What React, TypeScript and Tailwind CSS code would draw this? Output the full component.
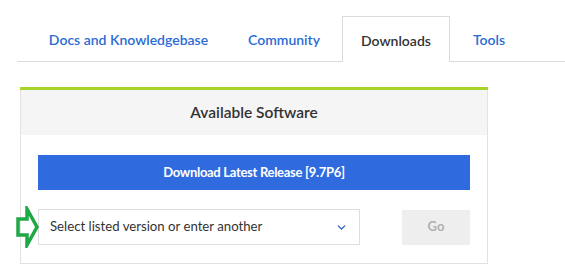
import { ChevronDown } from 'lucide-react'

const tabs = [
  { label: 'Docs and Knowledgebase', width: 'w-[195px]', active: false },
  { label: 'Community', width: 'w-[110px]', active: false },
  { label: 'Downloads', width: 'w-[108px]', active: true },
  { label: 'Tools', width: 'w-[72px]', active: false },
]

function GreenArrow() {
  return (
    <svg
      className="absolute left-[-23px] top-[-4px]"
      width="24"
      height="42"
      viewBox="0 0 24 42"
    >
      <path
        d="M2 13 H11 V3 L21 21 L11 39 V29 H2 Z"
        fill="none"
        stroke="#1fa846"
        strokeWidth="3.5"
        strokeLinejoin="miter"
      />
    </svg>
  )
}

export default function App() {
  return (
    <div
      className="w-[565px] h-[274px] bg-white overflow-hidden"
      style={{ fontFamily: 'Lato, "Open Sans", sans-serif' }}
    >
      {/* Tab strip */}
      <div className="pt-[16px] ml-[17px] border-b border-[#dcdcdc] h-[62px] flex items-stretch pl-[14px] gap-[3px]">
        {tabs.map((tab) => (
          <div
            key={tab.label}
            className={`${tab.width} shrink-0 flex items-center justify-center pt-[2px] text-[14px] font-semibold ${
              tab.active
                ? 'text-[#333333] bg-white border border-b-0 border-[#dcdcdc] -mb-px'
                : 'text-[#2a6bd4]'
            }`}
          >
            {tab.label}
          </div>
        ))}
      </div>

      {/* Panel */}
      <div className="ml-[20px] mt-[25px] w-[468px] border border-t-0 border-[#e2e2e2]">
        <div className="h-[3px] bg-[#a8d42a] -mx-px" />
        <div className="h-[45px] bg-[#f5f5f5] flex items-center justify-center text-[15.5px] font-semibold text-[#333333]">
          Available Software
        </div>
        <div className="px-[17px] pt-[20px] pb-[18px]">
          <button className="w-full h-[35px] bg-[#2f6ade] text-white text-[13px] tracking-[-0.3px] font-bold flex items-center justify-center">
            Download Latest Release [9.7P6]
          </button>
          <div className="mt-[19px] flex items-center justify-between">
            <div className="relative w-[322px] h-[36px] border border-[#dedede] bg-white flex items-center pl-[11px] pr-[11px]">
              <GreenArrow />
              <span className="flex-1 text-[13.2px] text-[#333333]">
                Select listed version or enter another
              </span>
              <ChevronDown size={13} strokeWidth={2.5} className="text-[#2a5db8]" />
            </div>
            <button className="w-[68px] h-[35px] bg-[#eeeeee] text-[#b0b0b0] text-[13px] font-bold">
              Go
            </button>
          </div>
        </div>
      </div>
    </div>
  )
}
